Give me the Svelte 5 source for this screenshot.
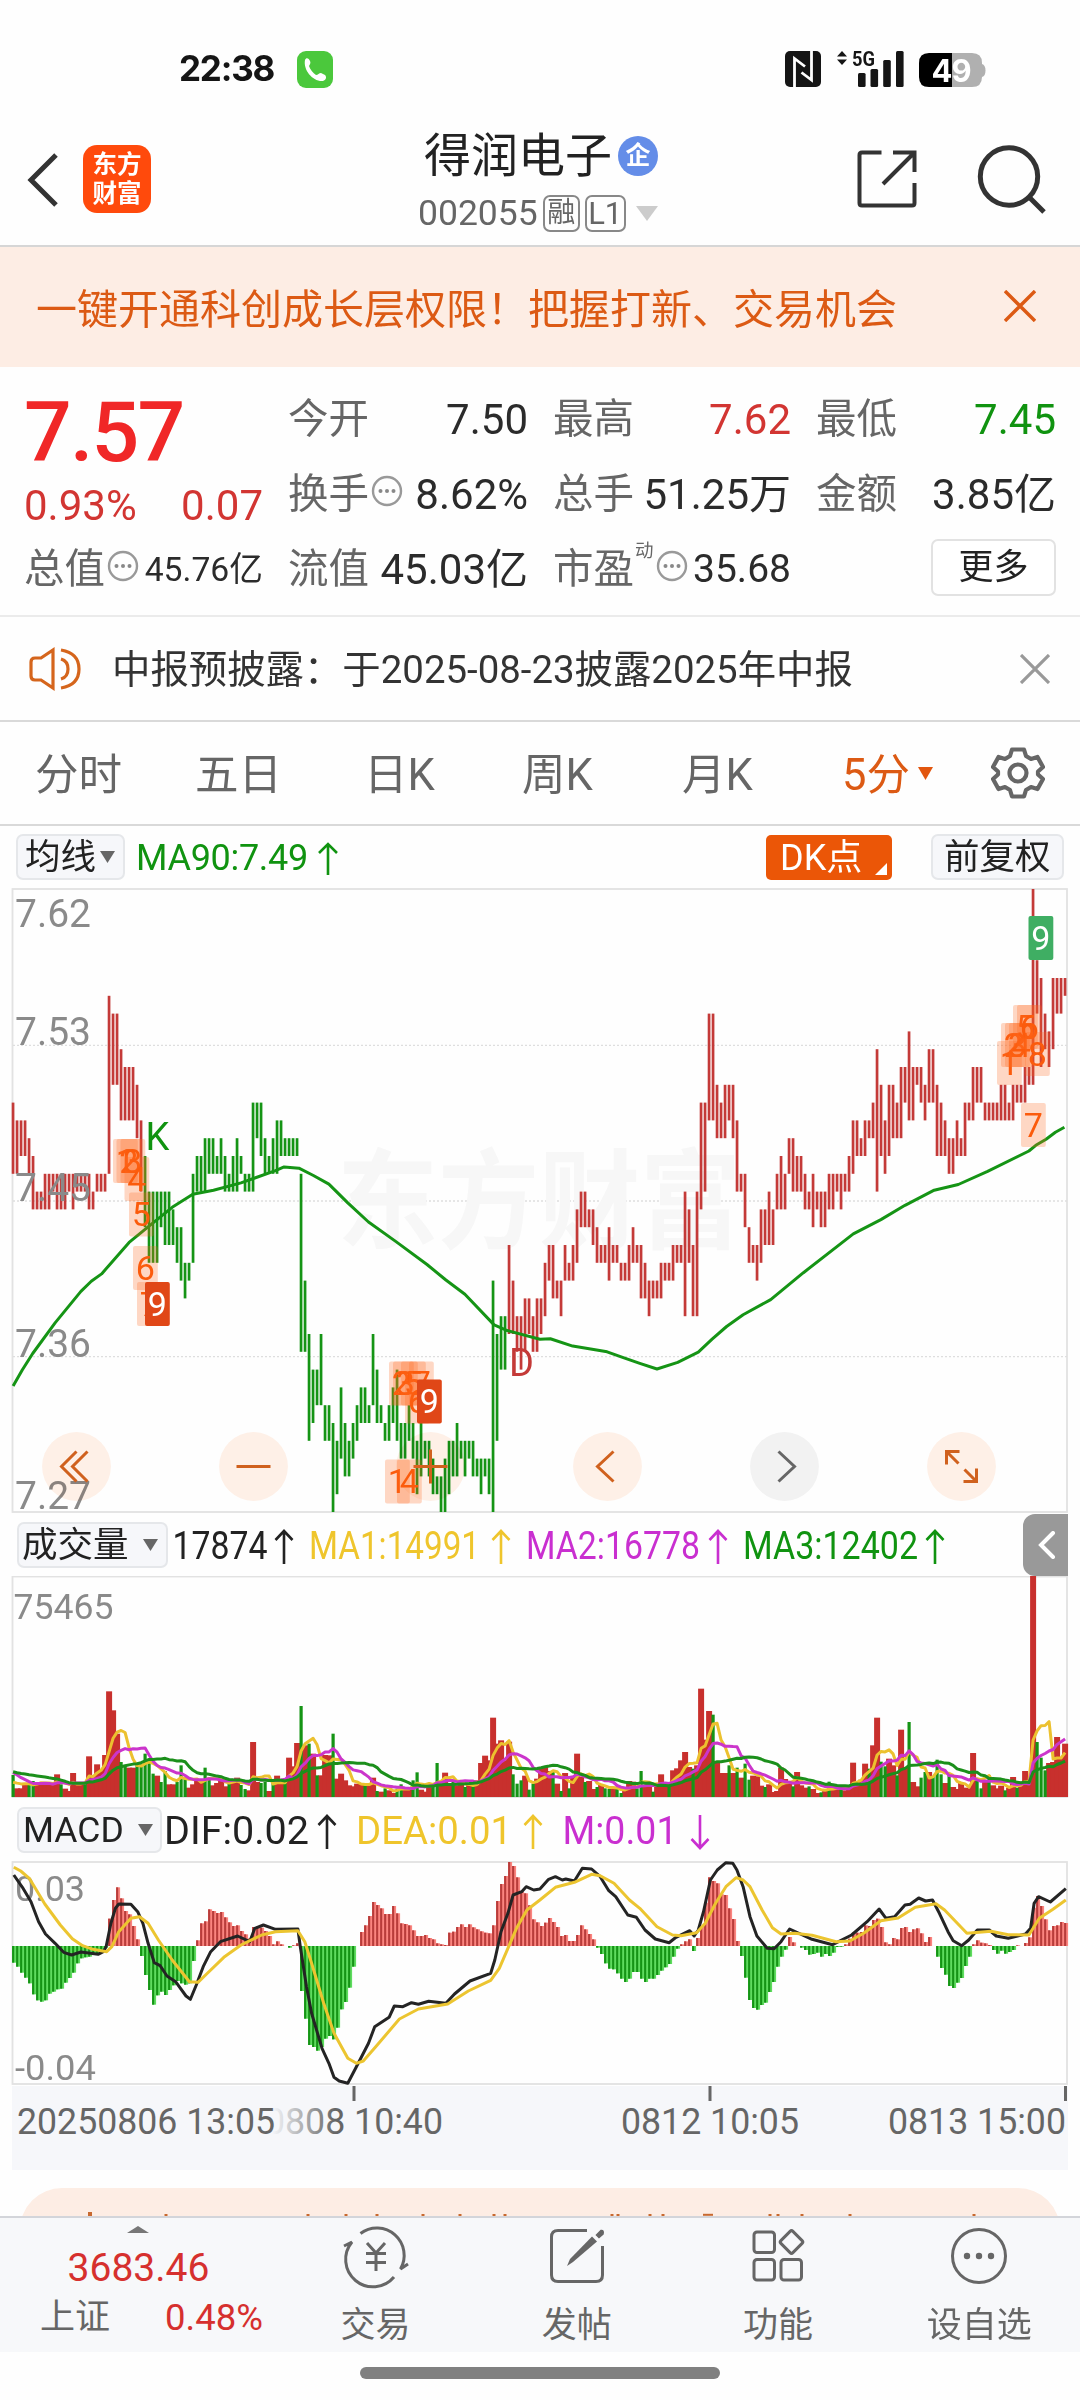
<script>
  const RED = '#c43a38';
  const GREEN = '#159415';
  const X0 = 13.1;
  const STEP = 4;
  const barX = (i) => X0 + i * STEP;

  // high,low of each 5-minute bar, counted in cents below 7.62
  const candles = `12,16 13,16 13,15 13,15 14,16 15,18 17,18 17,18 16,18 16,18 16,17 16,18 16,18 16,18 16,17 16,18 16,17 16,17 16,17 16,18 17,18 16,17 16,17 16,17
6,16 7,11 7,11 9,13 10,13 10,13 10,13 11,14 13,17 15,19 17,21 17,21 17,21 17,19 17,20 17,20 18,20 19,21 19,22 21,23 21,22 16,21 15,17 15,17
14,17 14,16 14,16 15,16 14,16 15,17 16,17 15,17 14,17 15,16 16,17 16,17 12,17 12,14 12,15 14,16 15,16 14,16 13,16 13,15 14,15 14,15 14,15 14,15
16,26 22,26 25,31 27,30 27,29 25,29 29,31 29,31 30,35 31,34 28,32 30,33 31,33 30,32 29,31 28,30 28,30 29,30 25,29 27,30 29,30 30,31 29,31 28,30
27,31 30,32 30,32 29,31 30,32 31,34 30,33 31,32 31,33 32,34 33,34 33,35 32,35 31,34 31,33 30,33 31,32 31,33 31,32 31,33 32,33 32,34 32,33 32,34
22,35 25,31 24,27 24,27 20,25 22,25 24,26 24,27 23,26 23,25 24,26 23,26 23,25 21,24 20,22 20,23 22,23 22,24 20,22 21,22 20,22 18,21 17,19 17,19
18,19 18,20 19,21 20,21 20,21 19,22 20,21 20,21 21,22 21,22 20,22 19,21 20,21 20,23 21,23 22,24 22,23 22,23 21,23 21,22 21,22 20,22 20,21 20,21
17,24 18,21 20,24 17,24 12,18 12,17 7,13 7,13 11,14 12,14 11,14 11,13 11,14 13,17 16,17 16,19 19,21 20,21 20,22 18,21 18,20 17,20 18,20 16,18
15,18 16,18 14,16 14,17 15,17 15,17 16,18 17,18 16,19 17,18 17,19 17,19 16,18 16,18 16,17 16,18 16,17 15,17 13,16 13,15 14,15 13,15 13,14 12,14
9,17 11,15 13,16 11,15 11,14 12,14 10,14 10,12 8,13 10,13 10,11 10,12 11,13 9,12 9,12 11,15 12,15 13,15 14,16 14,16 13,15 14,15 12,15 12,13
10,13 10,12 10,12 12,13 12,13 12,13 12,13 11,13 11,13 12,13 11,13 11,12 11,12 10,12 10,11 0,11 4,7 5,10 7,9 8,10 5,9 5,7 5,7 5,6`
    .split(/\s+/).map((p, i) => {
      const [hi, lo] = p.split(',').map(Number);
      return { x: barX(i), y: 1 + hi * 17.8, h: (lo - hi) * 17.8, c: i > 32 && i < 124 ? GREEN : RED };
    });

  const volumes = `g66 r26 r26 r42 g40 g48 r38 r45 r40 r38 r40 r68 g38 r25 r18 r72 r40 r42 g40 r122 r60 r98 r80 r126
r317 r260 r190 g105 g95 r88 r88 g95 g98 g130 g112 g70 r64 g45 g78 r38 r38 g45 g95 g60 r28 r38 r50 r45
g88 g58 r35 r42 r60 r32 g40 r50 r58 g36 g24 r20 r165 r45 g42 g45 r18 g45 r64 r42 g45 r118 r92 r162
g273 r155 g160 r130 g65 r65 r126 r125 g190 r55 r70 r50 r35 r32 r40 r38 g42 r35 r58 g18 r16 g26 r20 r12
g25 g38 r25 r22 g50 g74 r22 r16 r42 g35 g102 r40 r73 r40 g48 r35 r40 g30 r36 g32 r50 r102 r124 r110
r238 r160 r170 r110 r166 g68 g40 g50 r64 g22 g40 r55 r90 r92 r78 g78 r40 g18 r72 g26 r60 r130 r60 g45
r48 r24 g30 r38 g26 g24 r25 g24 g12 r22 r48 r46 g26 g78 r30 r42 g16 r32 r68 r30 g38 r80 r86 r110
r135 r90 g85 r95 r325 r172 r258 g247 r104 r72 r72 g95 r72 g88 r58 g100 g52 r64 r62 r34 g30 r38 r15 r18
r88 r54 r42 g32 r75 r35 r28 g32 r24 r12 g14 r20 g46 r30 r22 g26 r20 r35 r103 r40 r52 r100 g85 r155
r238 g106 g92 r115 r95 g65 r202 r90 g225 r45 r32 g58 g75 r75 g62 g112 g68 r42 g72 r30 r24 r42 r28 r26
r132 g48 g26 r50 g65 r35 r26 r34 g20 r28 r60 g28 r40 r78 r45 r664 g165 g118 g80 r102 r105 r180 r118 r160`
    .split(/\s+/).map((p, i) => ({ up: p[0] === 'r', v: +p.slice(1) / 3, x: barX(i) }));
  const volBars = [...volumes.filter((b) => b.up), ...volumes.filter((b) => !b.up)];

  const history = [...Array(10).fill(26), ...Array(5).fill(34), ...Array(4).fill(13)];
  const volAll = [...history, ...volumes.map((b) => b.v)];
  const movingAvg = (n) => volumes.map((b, i) => {
    const end = i + history.length + 1;
    const sum = volAll.slice(end - n, end).reduce((a, v) => a + v, 0);
    return `${b.x},${(221 - sum / n).toFixed(1)}`;
  }).join(' ');
  const volLines = [
    { c: '#ecc12f', pts: movingAvg(5) },
    { c: '#cb35cb', pts: movingAvg(10) },
    { c: '#1b8f1b', pts: movingAvg(20) }
  ];

  const hist = `-50 -62 -80 -95 -112 -145 -163 -167 -163 -143 -137 -130 -128 -110 -96 -80 -52 -37 -34 -32 -26 -22 -15 -5
82 138 176 143 105 95 60 20 -30 -87 -132 -176 -148 -137 -147 -132 -118 -105 -112 -116 -112 -45 17 68
74 110 105 99 102 86 71 60 62 45 35 22 57 58 55 45 30 5 14 5 0 -5 2 8
-135 -218 -297 -303 -314 -303 -278 -270 -280 -245 -190 -168 -125 -62 0 42 62 90 132 123 113 96 96 120
98 68 66 62 47 30 30 33 24 20 8 5 3 40 43 57 65 57 65 56 50 44 40 38
62 135 186 210 252 240 206 162 158 122 80 71 60 70 84 72 57 30 33 15 15 33 62 50
36 20 -5 -24 -52 -68 -70 -82 -98 -108 -98 -78 -78 -98 -108 -98 -98 -87 -74 -64 -54 -32 -8 5
14 20 -15 24 58 130 206 195 188 155 153 113 81 15 -30 -95 -162 -186 -191 -177 -170 -138 -108 -62
-32 -11 27 11 0 -5 -12 -26 -24 -20 -32 -24 -30 -20 -3 -2 5 22 40 40 42 62 60 78
82 57 11 5 24 20 54 57 42 50 53 38 12 27 0 -32 -66 -86 -120 -126 -110 -96 -60 -32
5 17 10 8 3 -12 -23 -14 -23 -18 -12 2 0 9 26 115 150 120 80 47 60 62 72 69`
    .split(/\s+/).map((p, i) => ({ x: barX(i), h: Math.abs(+p) / 3, up: +p > 0 }));

  const trace = (text, sy, dy) => text.trim().split(/\s+/).map((p) => {
    const [x, y] = p.split(',').map(Number);
    return `${(x / 2.904).toFixed(1)},${(y / sy + dy).toFixed(1)}`;
  }).join(' ');

  const ma90 = trace(`38,1240 65,1200 95,1160 160,1085 235,1008 265,983 295,965 375,888 430,850 500,802 560,770 620,760 700,742 740,730 800,712 825,703 868,706 910,724 955,745 1010,791 1070,838 1150,886 1240,942 1295,980 1350,1015 1435,1090 1470,1103 1568,1125
1598,1124 1663,1142 1763,1156 1810,1170 1858,1184 1908,1198 1968,1182 2028,1157 2068,1125 2110,1094 2158,1065 2238,1028 2333,962 2478,867 2558,832 2628,797 2713,760 2783,746 2868,714 2988,664 3008,650 3038,635 3065,618 3091,606`, 2.45, -8);
  const dif = trace(`40,225 65,262 90,305 112,365 132,402 160,430 185,457 208,465 235,456 285,463 300,455 308,440 322,370 335,325 345,312 380,313 400,335 415,370 430,430 448,488 465,497 485,528 510,545 540,588 553,598 570,555 590,500 612,455 640,425 690,408 725,425 740,385 765,375 800,388 865,387 872,440 890,560 905,640 935,745 955,790 970,832 985,843 1010,850 1035,800 1070,730 1088,680 1130,652 1145,618 1170,620 1195,608 1215,613 1245,604 1295,610 1320,582 1365,543 1425,520 1437,480 1455,395 1475,340 1490,285 1515,275 1528,260 1550,270
1568,267 1593,238 1613,230 1633,240 1643,237 1668,243 1691,205 1718,207 1743,230 1768,272 1788,290 1823,345 1848,352 1873,390 1903,417 1943,428 1963,412 2003,392 2016,408 2028,390 2043,335 2063,240 2083,210 2108,188 2128,190 2140,210 2158,260 2178,350 2198,408 2228,445 2248,446 2268,425 2293,387 2358,418 2418,434 2473,405 2518,365 2553,327 2573,355 2598,350 2628,315 2643,313 2668,294 2688,303 2708,300 2728,340 2753,395 2768,422 2793,437 2813,420 2838,390 2873,390 2893,408 2928,415 2978,402 2993,385 3003,310 3016,290 3050,306 3095,266`, 3, -61);
  const dea = trace(`40,202 60,213 85,235 130,312 175,375 210,416 240,437 270,448 310,455 325,440 345,395 380,355 405,350 430,370 460,420 500,480 550,545 575,547 600,522 650,472 700,435 760,405 800,395 865,392 885,425 905,490 940,610 970,700 1010,775 1035,790 1055,783 1090,742 1160,657 1215,627 1300,612 1360,573 1425,541 1450,505 1475,445 1500,385 1530,330
1568,300 1613,262 1668,247 1718,223 1743,227 1783,250 1828,300 1858,325 1908,380 1953,405 1978,407 2023,398 2048,370 2078,310 2108,260 2138,233 2158,240 2178,260 2213,330 2243,383 2268,402 2308,400 2358,406 2428,425 2468,423 2508,400 2558,362 2608,354 2658,322 2718,311 2743,330 2808,400 2878,394 2928,404 2988,405 3018,355 3058,328 3095,300`, 3, -61);

  // turn-count markers: digit, left, top, kind
  const marks = [
    ['1', 113, 251], ['2', 116.5, 251], ['3', 120.5, 251], ['4', 124.5, 269], ['5', 129, 304.5], ['6', 133, 358], ['7', 137, 394], ['9', 145, 394, 'solid'],
    ['1', 385, 571.5], ['2', 389, 473.5], ['3', 393, 473.5], ['4', 397, 571.5], ['5', 401, 473.5], ['6', 405, 491.5], ['7', 409, 473.5], ['9', 417, 491.5, 'solid'],
    ['1', 997, 153], ['2', 1001, 135], ['3', 1005, 135], ['4', 1009, 135], ['5', 1013, 117], ['6', 1017, 117], ['7', 1021, 215], ['8', 1025, 144], ['9', 1028.5, 28, 'green']
  ];

  const axisLabels = [['7.62', 39], ['7.53', 157], ['7.45', 313], ['7.36', 469], ['7.27', 621]];
  const controls = [
    { x: 76.5, d: 'M0 -15L-15 0L0 15M11 -15L-4 0L11 15' },
    { x: 253.5, d: 'M-17 0H17' },
    { x: 430.5, d: 'M-17 0H17M0 -17V17' },
    { x: 607.5, d: 'M6 -15L-10 0L6 15' },
    { x: 784.5, d: 'M-6 -15L10 0L-6 15', muted: true },
    { x: 961.5, d: 'M-15 -2V-15H-2M-15 -15L-3 -3M15 2V15H2M15 15L3 3' }
  ];

  const volLegend = [
    { t: '17874', x: 172.5, w: 95, a: 284, c: '#222', up: true },
    { t: 'MA1:14991', x: 309, w: 171, a: 501, c: '#efc52c', up: true },
    { t: 'MA2:16778', x: 526, w: 174, a: 718, c: '#c92fd0', up: true },
    { t: 'MA3:12402', x: 743, w: 175, a: 935, c: '#109310', up: true }
  ];
  const macdLegend = [
    { t: 'DIF:0.02', x: 164, w: 145, a: 327, c: '#222', up: true },
    { t: 'DEA:0.01', x: 356, w: 156, a: 533, c: '#efc52c', up: true },
    { t: 'M:0.01', x: 562.5, w: 115, a: 700, c: '#c92fd0', up: false }
  ];

  const periods = [['分时', 0], ['五日', 0], ['日K', 0], ['周K', 0], ['月K', 0], ['5分', 1]];
  const promoTips = [166, 308, 346, 377, 423, 460, 494, 505, 612, 618, 650, 663, 770, 778, 802, 850, 974];
</script>

{#snippet dots()}
  <svg class="dots" width="32" height="32" viewBox="-16 -16 32 32">
    <circle r="14" fill="none" stroke="#999" stroke-width="2.400" />
    <circle cx="-6.500" r="2" fill="#888" /><circle r="2" fill="#888" /><circle cx="6.500" r="2" fill="#888" />
  </svg>
{/snippet}

{#snippet legend(items)}
  <svg class="legend" width="860" height="64" viewBox="160 0 860 64">
    {#each items as it}
      <text x={it.x} y="46" fill={it.c} textLength={it.w} lengthAdjust="spacingAndGlyphs">{it.t}</text>
      <path d={it.up ? `M${it.a} 51V18M${it.a - 8.5} 27L${it.a} 18L${it.a + 8.5} 27` : `M${it.a} 17V50M${it.a - 8.5} 41L${it.a} 50L${it.a + 8.5} 41`} fill="none" stroke={it.c} stroke-width="2.600" />
    {/each}
  </svg>
{/snippet}

<div class="screen">
  <div class="status">
    <span class="time">22:38</span>
    <svg class="call" width="36" height="37" viewBox="0 0 36 37">
      <rect width="36" height="37" rx="9" fill="#4bc83c" />
      <path d="M8 9C6 19 16 31 26 30C29 29 30 26 28 24L24 22C22 22 21 24 19 24C16 22 13 18 12 15C13 13 14 12 13 10C12 7 9 6 8 9Z" fill="#fff" />
    </svg>
    <svg class="nfc" width="36" height="36" viewBox="0 0 36 36">
      <rect width="36" height="36" rx="5" fill="#151515" />
      <path d="M9.500 36V7.500L20 15.500M26.500 0V29L16.500 21.500" fill="none" stroke="#fff" stroke-width="2.800" />
    </svg>
    <svg class="signal" width="70" height="40" viewBox="0 0 70 40">
      <path d="M1 8.500L6 3L11 8.500ZM1 11.500L6 17L11 11.500Z" fill="#151515" />
      <text x="16" y="17.500" class="fiveg" textLength="23" lengthAdjust="spacingAndGlyphs">5G</text>
      <rect x="22" y="25" width="7.600" height="14" rx="1.500" /><rect x="34.500" y="21" width="7.600" height="18" rx="1.500" /><rect x="47.200" y="12" width="7.600" height="27" rx="1.500" /><rect x="60" y="3" width="7.600" height="36" rx="1.500" />
    </svg>
    <svg class="battery" width="67" height="35" viewBox="0 0 67 35">
      <path d="M63 11Q66.500 12 66.500 17.500T63 24Z" fill="#b0b0b0" />
      <path d="M33 0H53Q63 0 63 10V24Q63 34 53 34H33Z" fill="#b0b0b0" />
      <path d="M33 0H10Q0 0 0 10V24Q0 34 10 34H33Z" fill="#000" />
      <text x="32" y="28.500" text-anchor="middle" class="pct">49</text>
    </svg>
  </div>

  <header>
    <svg width="32" height="56" viewBox="0 0 32 56"><path d="M29 3L4 28L29 53" fill="none" stroke="#333" stroke-width="5" /></svg>
    <div class="logo"><span>东方</span><span>财富</span></div>
    <div class="title">
      <div class="name"><span>得润电子</span><i>企</i></div>
      <div class="code"><span>002055</span><b>融</b><b class="l1">L1</b>
        <svg width="22" height="15" viewBox="0 0 22 15"><path d="M0 0H22L11 15Z" fill="#ccc" /></svg>
      </div>
    </div>
    <svg class="share" width="60" height="60" viewBox="0 0 60 60"><path d="M24.500 3.500H5Q2.500 3.500 2.500 6V54Q2.500 56.500 5 56.500H55Q57.500 56.500 57.500 54V34M36 3.500H57.500V23M57.500 3.500L26 35" fill="none" stroke="#333" stroke-width="4" /></svg>
    <svg class="search" width="70" height="70" viewBox="0 0 70 70"><circle cx="33" cy="32.500" r="28.700" fill="none" stroke="#333" stroke-width="5" /><path d="M53 53L68 68" stroke="#333" stroke-width="5" /></svg>
  </header>

  <div class="banner">
    <span>一键开通科创成长层权限！把握打新、交易机会</span>
    <svg width="32" height="32" viewBox="0 0 32 32"><path d="M1 1L31 31M31 1L1 31" stroke="#dc5a14" stroke-width="3.400" /></svg>
  </div>

  <section class="quote">
    <div class="last">
      <div class="price">7.57</div>
      <div class="chg"><span>0.93%</span><span>0.07</span></div>
      <div class="cell small"><em>总值</em>{@render dots()}<strong>45.76亿</strong></div>
    </div>
    <div class="stats">
      <div class="cell"><em>今开</em><strong>7.50</strong></div>
      <div class="cell"><em>最高</em><strong class="red">7.62</strong></div>
      <div class="cell"><em>最低</em><strong class="green">7.45</strong></div>
      <div class="cell"><em>换手</em>{@render dots()}<strong>8.62%</strong></div>
      <div class="cell"><em>总手</em><strong>51.25万</strong></div>
      <div class="cell"><em>金额</em><strong>3.85亿</strong></div>
      <div class="cell"><em>流值</em><strong>45.03亿</strong></div>
      <div class="cell"><em>市盈</em><sup>动</sup>{@render dots()}<strong class="pe">35.68</strong></div>
      <div class="cell"><button class="more">更多</button></div>
    </div>
  </section>

  <div class="news">
    <svg width="54" height="44" viewBox="0 0 54 44" fill="none" stroke="#d5651c" stroke-width="3.200">
      <path d="M24 3V41L12 33H6Q2 33 2 29V15Q2 11 6 11H12Z" /><path d="M32 12Q39 14 39 22T32 32M32 3Q50 6 50 22T32 41" />
    </svg>
    <span>中报预披露：于2025-08-23披露2025年中报</span>
    <svg width="30" height="30" viewBox="0 0 30 30"><path d="M1 1L29 29M29 1L1 29" stroke="#999" stroke-width="3.200" /></svg>
  </div>

  <nav class="tabs">
    {#each periods as [label, active], i}
      <span class="t{i}" class:active>{label}</span>
    {/each}
    <svg class="caret" width="15" height="13" viewBox="0 0 15 13"><path d="M0 0H15L7.500 13Z" fill="#e2560f" /></svg>
    <svg class="gear" width="54" height="54" viewBox="-27 -27 54 54" fill="none" stroke="#666" stroke-width="4.200">
      <path d="M-6 -23.500H6L8 -17L13 -14L19.500 -16L25 -6L20 -1.500V1.500L25 6L19.500 16L13 14L8 17L6 23.500H-6L-8 17L-13 14L-19.500 16L-25 6L-20 1.500V-1.500L-25 -6L-19.500 -16L-13 -14L-8 -17Z" stroke-linejoin="round" /><circle r="8.500" />
    </svg>
  </nav>

  <div class="tools">
    <div class="chip avg">均线<svg width="15" height="12" viewBox="0 0 15 12"><path d="M0 0H15L7.500 12Z" fill="#666" /></svg></div>
    <span class="ma">MA90:7.49</span>
    <svg class="uparrow" width="20" height="34" viewBox="0 0 20 34"><path d="M10 33V2M1 11L10 2L19 11" fill="none" stroke="#109310" stroke-width="2.600" /></svg>
    <div class="dk">DK点<svg width="12" height="12" viewBox="0 0 12 12"><path d="M12 0V12H0Z" fill="#fff" /></svg></div>
    <div class="chip adj">前复权</div>
  </div>

  <svg class="pane" width="1080" height="625" viewBox="0 0 1080 625">
    <rect x="12.500" y="1" width="1054.500" height="623" fill="none" stroke="#e2e2e2" stroke-width="1.800" />
    <path d="M13 157.300H1067M13 313H1067M13 468.700H1067" stroke="#dedede" stroke-width="1.300" stroke-dasharray="2 2" />
    <text x="337" y="352" class="water" textLength="404" lengthAdjust="spacingAndGlyphs">东方财富</text>
    {#each candles as c}
      <rect x={c.x - 1.4} y={c.y} width="2.700" height={c.h} fill={c.c} />
    {/each}
    {#each axisLabels as [t, y]}
      <text x="15" {y} class="axis big" textLength="76" lengthAdjust="spacingAndGlyphs">{t}</text>
    {/each}
    <polyline points={ma90} fill="none" stroke="#159415" stroke-width="3" stroke-linejoin="round" />
    <text x="145.500" y="262" class="kd" fill="#109310">K</text>
    <text x="509" y="488" class="kd" fill="#c43a38">D</text>
    {#each controls as b}
      <g transform="translate({b.x} 578.500)">
        <circle r="34.400" class="knob" fill={b.muted ? '#f3f3f3' : '#fff1e8'} />
        <path d={b.d} fill="none" stroke={b.muted ? '#666' : '#d0611e'} stroke-width="3" />
      </g>
    {/each}
    {#each marks as [d, x, y, kind]}
      <rect {x} {y} width="24.800" height="44" rx="2" class="mark {kind ?? 'soft'}" />
      <text x={x + 12.4} y={y + 33.5} class="digit {kind ?? 'soft'}">{d}</text>
    {/each}
  </svg>

  <div class="indicator">
    <div class="chip vol">成交量<svg width="15" height="12" viewBox="0 0 15 12"><path d="M0 0H15L7.500 12Z" fill="#666" /></svg></div>
    {@render legend(volLegend)}
    <div class="drawer"><svg width="18" height="28" viewBox="0 0 18 28"><path d="M15 2L3 14L15 26" fill="none" stroke="#fff" stroke-width="4" stroke-linecap="round" /></svg></div>
  </div>

  <svg class="pane" width="1080" height="222" viewBox="0 0 1080 222">
    <rect x="12.500" y="0.500" width="1054.500" height="220.500" fill="none" stroke="#e2e2e2" stroke-width="1.800" />
    {#each volBars as b}
      <rect x={b.x - (b.up ? 3 : 1.6)} y={221 - b.v} width={b.up ? 6 : 3.2} height={b.v} fill={b.up ? '#c8302d' : '#159415'} />
    {/each}
    {#each volLines as l}
      <polyline points={l.pts} fill="none" stroke={l.c} stroke-width="3" stroke-linejoin="round" />
    {/each}
    <text x="13.500" y="43" class="axis" textLength="100" lengthAdjust="spacingAndGlyphs">75465</text>
  </svg>

  <div class="indicator macd">
    <div class="chip mc">MACD<svg width="15" height="12" viewBox="0 0 15 12"><path d="M0 0H15L7.500 12Z" fill="#666" /></svg></div>
    {@render legend(macdLegend)}
  </div>

  <svg class="pane" width="1080" height="224" viewBox="0 0 1080 224">
    <rect x="12.500" y="1" width="1054.500" height="222" fill="none" stroke="#e2e2e2" stroke-width="1.800" />
    {#each hist as b}
      <rect x={b.x - 1} y={b.up ? 85 - b.h : 85} width="4" height={b.h} fill={b.up ? '#fb8580' : '#5fdc5f'} />
      <rect x={b.x - 1} y={b.up ? 85 - b.h : 85} width="2.100" height={b.h} fill={b.up ? '#b83c3a' : '#159415'} />
    {/each}
    <text x="15" y="40" class="axis" textLength="70" lengthAdjust="spacingAndGlyphs">0.03</text>
    <text x="15" y="219" class="axis" textLength="81" lengthAdjust="spacingAndGlyphs">-0.04</text>
    <polyline points={dif} fill="none" stroke="#242424" stroke-width="3" stroke-linejoin="round" />
    <polyline points={dea} fill="none" stroke="#ecc530" stroke-width="3" stroke-linejoin="round" />
  </svg>

  <svg class="pane dates" width="1080" height="85" viewBox="0 0 1080 85">
    <defs><linearGradient id="fade" gradientUnits="userSpaceOnUse" x1="272" y1="0" x2="335" y2="0"><stop offset="0" stop-color="#666" stop-opacity="0" /><stop offset="1" stop-color="#666" /></linearGradient></defs>
    <rect x="12" y="1" width="1056" height="84" fill="#f6f7fa" />
    <path d="M354 1V16M710 1V16M1065.500 1V16" stroke="#666" stroke-width="3" />
    <text x="17" y="49" textLength="258" lengthAdjust="spacingAndGlyphs">20250806 13:05</text>
    <text x="265" y="49" textLength="178" lengthAdjust="spacingAndGlyphs" class="faded">0808 10:40</text>
    <text x="621" y="49" textLength="178" lengthAdjust="spacingAndGlyphs">0812 10:05</text>
    <text x="888" y="49" textLength="178" lengthAdjust="spacingAndGlyphs">0813 15:00</text>
  </svg>

  <div class="promo">
    <svg width="1040" height="28" viewBox="20 0 1040 28">
      <path d="M20 28V42A42 42 0 0 1 62 0H1018A42 42 0 0 1 1060 42Z" fill="#fdede4" />
      <path d="M90 24V28" stroke="#c8692f" stroke-width="4" />
      {#each promoTips as x}<path d="M{x} 26V28" stroke="#c8692f" stroke-width="3" />{/each}
      <path d="M703 26.800H713" stroke="#c8692f" stroke-width="2" />
    </svg>
  </div>

  <footer>
    <div class="index">
      <svg width="22" height="7" viewBox="0 0 22 7"><path d="M0 7L11 0L22 7Z" fill="#777" /></svg>
      <div class="pts">3683.46</div>
      <div class="row"><span>上证</span><b>0.48%</b></div>
    </div>
    <div class="item trade">
      <svg width="68" height="60" viewBox="-34 -30 68 60" fill="none" stroke="#666" stroke-width="3">
        <path d="M-15.500 -22.500A27.300 27.300 0 0 1 24.500 13L32 8M18 21A27.300 27.300 0 0 1 -24 -14L-32 -10" />
        <path d="M-9 -13L0 -3L9 -13M0 -3V15M-10 -2.500H10M-10 6.500H10" />
      </svg><span>交易</span>
    </div>
    <div class="item post">
      <svg width="60" height="60" viewBox="-30 -30 60 60" fill="none" stroke="#666" stroke-width="3">
        <path d="M10 -25.500H-19Q-25.500 -25.500 -25.500 -19V19Q-25.500 25.500 -19 25.500H19Q25.500 25.500 25.500 19V-10" />
        <path d="M15 -19.500L20 -14.500L-4 6L-10 10L-7 3Z" fill="#666" stroke="none" /><path d="M19.500 -21L24 -25.500Q27 -26 26 -22L22 -18.500Z" fill="#666" stroke-width="1.500" />
      </svg><span>发帖</span>
    </div>
    <div class="item func">
      <svg width="60" height="60" viewBox="-30 -30 60 60" fill="none" stroke="#666" stroke-width="3">
        <rect x="-24" y="-24" width="20.500" height="20.500" rx="3" /><rect x="-24" y="3.500" width="20.500" height="20.500" rx="3" /><rect x="3" y="3.500" width="20.500" height="20.500" rx="3" /><rect x="5" y="-22.500" width="17" height="17" rx="2" transform="rotate(45 13.500 -14)" />
      </svg><span>功能</span>
    </div>
    <div class="item watch">
      <svg width="60" height="60" viewBox="-30 -30 60 60"><circle r="26.500" fill="none" stroke="#666" stroke-width="3" /><circle cx="-12" r="3.200" fill="#666" /><circle r="3.200" fill="#666" /><circle cx="12" r="3.200" fill="#666" /></svg><span>设自选</span>
    </div>
  </footer>
  <div class="home"><i></i></div>
</div>

<style>
  :global(body) { margin: 0; background: #fefefe; }
  .screen { width: 1080px; height: 2400px; overflow: hidden; background: #fefefe; color: #333; font-family: Roboto, "Noto Sans CJK SC", sans-serif; display: flex; flex-direction: column; }
  .screen > * { flex: none; box-sizing: border-box; }
  svg { display: block; flex: none; }
  span, em, strong { white-space: nowrap; }
  em, i { font-style: normal; }

  .status { height: 110px; padding-top: 50px; display: flex; align-items: flex-start; }
  .time { width: 118px; margin-left: 179px; font: 700 35px/37px Inter, sans-serif; color: #151515; letter-spacing: -1.200px; }
  .call { margin-top: 1px; }
  .nfc { margin: 1px 15px 0 452px; }
  .signal { margin-right: 13px; margin-top: -2px; fill: #151515; }
  .battery { margin-top: 3px; }
  .fiveg { font: 700 21px Roboto, sans-serif; fill: #151515; }
  .pct { font: 700 31px Inter, sans-serif; fill: #fff; letter-spacing: -1px; }

  header { height: 137px; border-bottom: 2px solid #d6d6d6; display: flex; align-items: flex-start; }
  header > svg:first-child { margin: 42px 24px 0 27px; }
  .logo { width: 68px; height: 68px; margin-top: 35px; border-radius: 14px; background: #ff4a0c; color: #fff; font-size: 24.500px; font-weight: 700; line-height: 29px; display: flex; flex-direction: column; align-items: center; justify-content: center; }
  .title { margin-left: 268px; width: 250px; }
  .name { display: flex; align-items: center; height: 66px; margin-top: 13px; margin-left: 5px; font-size: 47px; color: #222; }
  .name span { line-height: 68px; }
  .name i { width: 40px; height: 40px; margin: -1px 0 0 6px; border-radius: 50%; background: #648de8; color: #fff; font-size: 25px; font-weight: 700; line-height: 39px; text-align: center; }
  .code { display: flex; align-items: center; height: 40px; margin-top: 4px; font-size: 35.500px; color: #666; }
  .code span { margin-left: -1px; line-height: 42px; }
  .code b { box-sizing: border-box; width: 37px; height: 37px; margin-left: 5px; border: 2px solid #888; border-radius: 7px; font-weight: 400; font-size: 28px; line-height: 32px; text-align: center; }
  .code .l1 { width: 41px; font-size: 31px; line-height: 34px; }
  .code svg { margin-left: 10px; }
  .share { margin: 39px 0 0 188px; }
  .search { margin: 34px 0 0 59px; }

  .banner { height: 120px; background: #fdede4; display: flex; align-items: center; justify-content: space-between; padding: 0 44px 2px 36px; color: #dc5a14; font-size: 41px; }

  .quote { height: 250px; border-bottom: 2px solid #ebebeb; display: flex; padding: 15px 24px 0 24px; }
  .last { width: 239px; margin-right: 25px; }
  .price { height: 92px; font-size: 84px; font-weight: 500; line-height: 101px; color: #f02727; letter-spacing: -1.800px; }
  .chg { box-sizing: border-box; height: 58px; padding-top: 5px; display: flex; justify-content: space-between; align-items: center; font-size: 42px; color: #d23532; line-height: 59px; }
  .stats { display: grid; grid-template-columns: 240px 238px 240px; column-gap: 25px; grid-auto-rows: 75px; }
  .cell { height: 75px; display: flex; align-items: center; font-size: 40.500px; line-height: 75px; }
  .cell em { color: #666; }
  .cell strong { font-weight: 400; color: #2b2b2b; font-size: 42px; margin-left: auto; }
  .cell strong.red { color: #d23532; }
  .cell strong.green { color: #109310; }
  .cell.small strong { font-size: 33.700px; }
  .cell strong.pe { font-size: 39px; }
  .dots { margin: -8px 0 0 2px; }
  .cell sup { font-size: 18.500px; line-height: 20px; color: #666; margin: -38px 0 0 1px; align-self: center; }
  .more { margin: -4px 0 0 auto; width: 125px; height: 57px; background: #fff; border: 2px solid #e2e2e2; border-radius: 7px; font: 35px/50px Roboto, "Noto Sans CJK SC", sans-serif; color: #222; padding: 0; }

  .news { height: 105px; border-bottom: 2px solid #d9d9d9; display: flex; align-items: center; padding: 0 30px 0 29px; font-size: 38.400px; color: #333; }
  .news span { margin: -5px auto 0 29px; }

  .tabs { height: 104px; border-bottom: 2px solid #d9d9d9; display: flex; align-items: center; font-size: 43.500px; color: #666; padding-left: 35px; }
  .tabs span { line-height: 100px; padding-top: 6px; }
  .t0 { width: 160px; } .t1 { width: 169px; } .t2 { width: 158px; } .t3 { width: 160px; } .t4 { width: 160px; } .t5 { width: 76px; }
  .tabs .active { color: #dc5a14; }
  .gear { margin-left: 58px; }

  .tools { height: 62px; display: flex; align-items: center; padding: 0 16px; }
  .chip { box-sizing: border-box; height: 46px; border: 2px solid #e5e7ea; border-radius: 7px; background: #f6f7fa; color: #222; font-size: 35.500px; line-height: 44px; display: flex; align-items: center; white-space: nowrap; }
  .avg { width: 109px; padding-left: 7px; gap: 4px; }
  .ma { margin: 2px 0 0 11px; width: 171px; font-size: 36px; color: #109310; letter-spacing: -0.300px; }
  .uparrow { margin-left: 11px; margin-top: 3px; }
  .dk { position: relative; box-sizing: border-box; width: 126px; height: 45px; margin-left: auto; border-radius: 5px; background: #eb5607; color: #fff; font-size: 36px; line-height: 47px; padding-left: 14px; }
  .dk svg { position: absolute; right: 5px; bottom: 5px; }
  .adj { width: 133px; margin-left: 39px; padding-left: 11px; }

  .axis { font-family: Roboto, sans-serif; font-size: 35px; fill: #8a8a8a; }
  .axis.big { font-size: 38px; }
  .water { font: 700 108px "Noto Sans CJK SC", sans-serif; fill: #f7f7f7; }
  .kd { font: 38px Roboto, sans-serif; }
  .knob { mix-blend-mode: multiply; }
  .mark.soft { fill: #ff6a20; fill-opacity: 0.26; }
  .mark.solid { fill: #e04717; }
  .mark.green { fill: #3fae63; }
  .digit { font: 34px Roboto, sans-serif; fill: #fff; text-anchor: middle; }
  .digit.soft { fill: #fb5b0c; }

  .indicator { height: 63px; display: flex; align-items: center; padding-left: 17px; position: relative; }
  .legend { position: absolute; left: 160px; top: 0; }
  .legend text { font: 39px Roboto, sans-serif; }
  .vol { width: 151px; padding-left: 3px; gap: 14px; }
  .mc { width: 145px; padding-left: 4px; gap: 14px; }
  .drawer { margin: 0 12px 0 auto; width: 45px; height: 62px; border-radius: 12px 0 0 12px; background: #999; display: flex; align-items: center; justify-content: center; }
  .drawer svg { margin-left: 2px; }

  .dates text { font: 36px Roboto, sans-serif; fill: #666; }
  .dates .faded { fill: url(#fade); }
  .promo { height: 46px; padding: 18px 20px 0; }

  footer { height: 136px; background: #f7f8fa; border-top: 2px solid #d3d5da; display: flex; color: #666; font-size: 35px; }
  .index { width: 277px; display: flex; flex-direction: column; align-items: center; padding-top: 8px; }
  .index svg { margin-left: -1px; }
  .pts { font-size: 39px; line-height: 46px; margin-top: 12px; color: #d6302e; }
  .row { box-sizing: border-box; width: 277px; padding: 0 14px 0 40px; display: flex; justify-content: space-between; align-items: center; height: 52px; margin-top: 1px; line-height: 52px; }
  .row b { font-weight: 400; font-size: 36.500px; color: #d6302e; }
  .item { width: 201.500px; display: flex; flex-direction: column; align-items: center; padding-top: 8px; }
  .item:nth-child(2) { margin-left: -2px; }
  .item svg { height: 60px; overflow: visible; }
  .item span { line-height: 52px; margin-top: 14px; }
  .home { height: 48px; display: flex; justify-content: center; padding-top: 15px; }
  .home i { width: 360px; height: 12px; border-radius: 6px; background: #808080; }
</style>
